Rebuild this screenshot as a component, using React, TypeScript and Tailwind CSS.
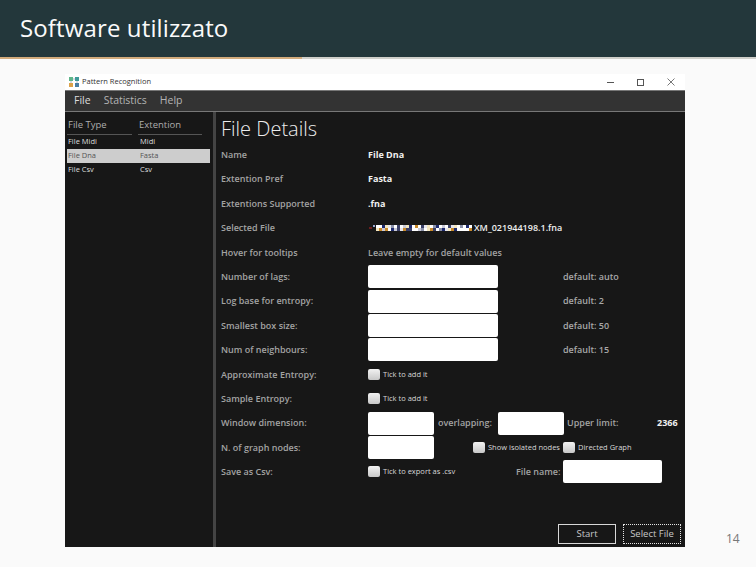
import React from "react";

const app = "font-['Open_Sans','Noto_Sans',sans-serif]";

function Label({ children }: { children: React.ReactNode }) {
  return <div className="w-[147px] shrink-0 text-[9px] font-semibold text-[#a3a3a3]">{children}</div>;
}
function Input({ w }: { w: string }) {
  return <div className={`${w} h-[23px] shrink-0 rounded-[2px] bg-white`} />;
}
function Check() {
  return <div className="h-[11px] w-[12px] shrink-0 rounded-[2px] bg-gradient-to-b from-[#f2f2f2] to-[#c8c8c8]" />;
}
function Row({ children }: { children: React.ReactNode }) {
  return <div className="flex h-[24.4px] items-center">{children}</div>;
}
function Val({ children }: { children: React.ReactNode }) {
  return <div className="text-[9px] font-bold text-[#f0f0f0]">{children}</div>;
}
function Def({ children }: { children: React.ReactNode }) {
  return <div className="ml-[65px] text-[9px] font-semibold text-[#a8a8a8]">{children}</div>;
}
function Tick({ children }: { children: React.ReactNode }) {
  return <div className="ml-[3px] text-[7.5px] text-[#d8d8d8]">{children}</div>;
}

const palette = ["#ffffff", "#e6e6ee", "#1e2a6e", "#f3e6c0", "#8a90a8", "#ffffff", "#3a3f66", "#c9c9d6", "#ffffff", "#c98a2a"];
const seed = [0, 5, 2, 3, 1, 4, 8, 6, 0, 7, 3, 2, 5, 9, 0, 6, 1, 3, 8, 4, 2, 0, 7, 5, 6, 1, 3, 0, 4, 8, 2, 5];
const mosaic = seed.flatMap((s, i) => [
  { x: 8 + i * 3, y: 0, c: palette[s] },
  { x: 8 + i * 3, y: 3, c: palette[(s + 3 + i) % 10] },
]);

export default function App() {
  return (
    <div className="flex h-[567px] w-[756px] flex-col overflow-hidden bg-[#fafafa]">
      <header className="flex h-[57px] items-center bg-[#23373b] pb-[1px] pl-5 font-['Open_Sans',sans-serif] text-[24px] tracking-[0.13px] text-[#fafafa]">
        <span>Software utilizzato</span>
      </header>
      <div className="flex h-[2px]">
        <div className="w-[302px] bg-[#d2ab7c]" />
        <div className="flex-1 bg-[#cfcfca]" />
      </div>
      <div className="flex flex-1 items-start pl-[65px] pt-[15px]">
        <div className={`flex h-[473px] w-[620px] flex-col bg-[#171717] ${app}`}>
          <div className="flex h-[16px] items-center bg-white pl-[4px] text-[7.5px] text-[#333]">
            <svg width="10" height="10" viewBox="0 0 10 10" className="mr-[3px]">
              <path d="M3 2H7M2 3V7M8 3V7" stroke="#9ab" strokeWidth="0.8" />
              <rect x="0" y="0" width="4" height="4" fill="#5fb58a" />
              <rect x="6" y="0" width="4" height="4" fill="#3f9a9a" />
              <rect x="0" y="6" width="4" height="4" fill="#dca24a" />
              <rect x="6" y="6" width="4" height="4" fill="#4a7fa5" />
            </svg>
            <span>Pattern Recognition</span>
            <div className="ml-auto flex items-center gap-[23px] pr-[10px]">
              <svg width="7" height="7" viewBox="0 0 7 7"><path d="M0 3.5H7" stroke="#555" /></svg>
              <svg width="7" height="7" viewBox="0 0 7 7"><rect x="0.5" y="0.5" width="6" height="6" fill="none" stroke="#555" /></svg>
              <svg width="8" height="8" viewBox="0 0 8 8"><path d="M0.5 0.5L7.5 7.5M7.5 0.5L0.5 7.5" stroke="#555" strokeWidth="0.8" /></svg>
            </div>
          </div>
          <div className="flex h-[22px] items-center gap-[13px] border-y border-y-[#777] bg-[#333] pl-[9px] text-[10.5px] text-[#b4b4b4]">
            <span className="text-[#dcdcdc]">File</span>
            <span>Statistics</span>
            <span>Help</span>
          </div>
          <div className="flex min-h-0 flex-1">
            <div className="flex w-[148px] shrink-0 flex-col pl-[2px] pr-[3px] pt-[6px]">
              <div className="flex h-[17px] gap-[6px] text-[9.5px] text-[#adadad]">
                <div className="w-[65px] border-b border-b-[#555] pl-[1px]">File Type</div>
                <div className="w-[64px] border-b border-b-[#555] pl-[1px]">Extention</div>
              </div>
              <div className="flex h-[14px] items-center text-[7.5px] font-medium text-[#dedede]">
                <span className="w-[73px] pl-[1px]">File Midi</span><span>Midi</span>
              </div>
              <div className="flex h-[14px] items-center bg-[#cdcdcd] text-[7.5px] text-[#555]">
                <span className="w-[73px] pl-[1px]">File Dna</span><span>Fasta</span>
              </div>
              <div className="flex h-[14px] items-center text-[7.5px] font-medium text-[#dedede]">
                <span className="w-[73px] pl-[1px]">File Csv</span><span>Csv</span>
              </div>
            </div>
            <div className="w-[3px] shrink-0 bg-[#444]" />
            <div className="flex min-w-0 flex-1 flex-col pl-[5px]">
              <div className="flex h-[30.6px] items-end pb-[1px] text-[20px] leading-[27px] font-light text-[#ececec]">File Details</div>
              <Row><Label>Name</Label><Val>File Dna</Val></Row>
              <Row><Label>Extention Pref</Label><Val>Fasta</Val></Row>
              <Row><Label>Extentions Supported</Label><Val>.fna</Val></Row>
              <Row>
                <Label>Selected File</Label>
                <svg width="106" height="6" viewBox="0 0 106 6" className="shrink-0">
                  <rect x="1" y="2" width="3" height="2" fill="#6b1d1d" />
                  <rect x="5" y="0" width="2" height="2" fill="#9aa6d0" />
                  {mosaic.map((m, i) => (
                    <rect key={i} x={m.x} y={m.y} width={3} height={3} fill={m.c} />
                  ))}
                </svg>
                <div className="text-[9px] font-semibold text-[#f0f0f0]">XM_021944198.1.fna</div>
              </Row>
              <Row><Label>Hover for tooltips</Label><div className="text-[9px] font-semibold text-[#a3a3a3]">Leave empty for default values</div></Row>
              <Row><Label>Number of lags:</Label><Input w="w-[130px]" /><Def>default: auto</Def></Row>
              <Row><Label>Log base for entropy:</Label><Input w="w-[130px]" /><Def>default: 2</Def></Row>
              <Row><Label>Smallest box size:</Label><Input w="w-[130px]" /><Def>default: 50</Def></Row>
              <Row><Label>Num of neighbours:</Label><Input w="w-[130px]" /><Def>default: 15</Def></Row>
              <Row><Label>Approximate Entropy:</Label><Check /><Tick>Tick to add it</Tick></Row>
              <Row><Label>Sample Entropy:</Label><Check /><Tick>Tick to add it</Tick></Row>
              <Row>
                <Label>Window dimension:</Label>
                <Input w="w-[66px]" />
                <div className="ml-[4px] w-[60px] text-[9px] font-semibold text-[#a3a3a3]">overlapping:</div>
                <Input w="w-[66px]" />
                <div className="ml-[3px] w-[90px] text-[9px] font-semibold text-[#a3a3a3]">Upper limit:</div>
                <div className="text-[9px] font-bold text-[#f0f0f0]">2366</div>
              </Row>
              <Row>
                <Label>N. of graph nodes:</Label>
                <Input w="w-[66px]" />
                <div className="ml-[39px]"><Check /></div>
                <div className="ml-[3px] w-[75px] text-[7.5px] text-[#d8d8d8]">Show isolated nodes</div>
                <Check />
                <Tick>Directed Graph</Tick>
              </Row>
              <Row>
                <Label>Save as Csv:</Label>
                <Check />
                <div className="ml-[3px] w-[133px] text-[7.5px] text-[#d8d8d8]">Tick to export as .csv</div>
                <div className="w-[47px] text-[9px] font-semibold text-[#a3a3a3]">File name:</div>
                <Input w="w-[99px]" />
              </Row>
              <div className="mt-auto flex justify-end gap-[7px] pb-[3px] pr-[4px]">
                <div className="flex h-[20px] w-[58px] items-center justify-center border border-[#d8d8d8] text-[9.5px] text-[#c8c8c8]">Start</div>
                <div className="flex h-[20px] w-[58px] items-center justify-center border border-dotted border-[#e4e4e4] text-[9.5px] text-[#c8c8c8]">Select File</div>
              </div>
            </div>
          </div>
        </div>
        <div className="mt-[456px] ml-[41px] font-['Open_Sans',sans-serif] text-[12px] text-[#777777]">14</div>
      </div>
    </div>
  );
}
